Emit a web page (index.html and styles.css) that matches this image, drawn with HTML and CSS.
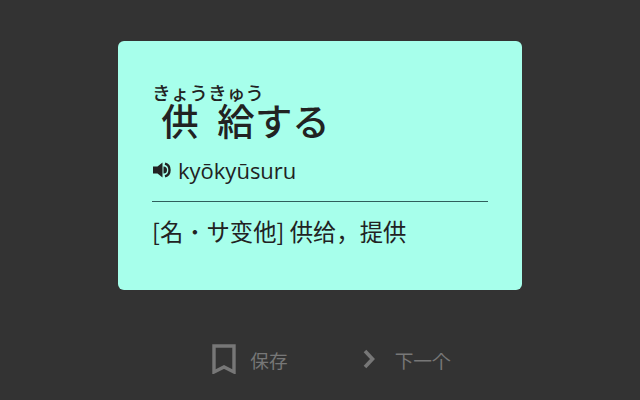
FILE: index.html
```html
<!DOCTYPE html>
<html lang="ja">
<head>
<meta charset="utf-8">
<title>供給する</title>
<link rel="stylesheet" href="styles.css">
</head>
<body>
<main class="page">
  <section class="card">
    <h1 class="word"><ruby>供<rt>きょう</rt></ruby><ruby>給<rt>きゅう</rt></ruby>する</h1>
    <div class="reading">
      <svg class="speaker" viewBox="0 0 18 16" width="18" height="16" aria-hidden="true">
        <path d="M0 4.5h4.5L9.5 .5v15l-5-4H0z" fill="#222"/>
        <path d="M10.5 4.5a3.5 3.5 0 0 1 0 7z" fill="#222"/>
        <path d="M12 1.6c6 1.6 6 11.2 0 12.8" fill="none" stroke="#222" stroke-width="2.4"/>
      </svg>
      <span>kyōkyūsuru</span>
    </div>
    <hr class="rule">
    <p class="meaning">[名<span class="dot">・</span>サ变他] 供给，提供</p>
  </section>
  <nav class="actions">
    <a class="action save">
      <svg viewBox="0 0 24 30" width="24" height="30" aria-hidden="true"><path d="M2 2h20v26l-10-5-10 5z" fill="none" stroke="#777" stroke-width="3.4"/></svg>
      <span>保存</span>
    </a>
    <a class="action next">
      <svg viewBox="0 0 14 20" width="14" height="20" aria-hidden="true"><path d="M3 2l7.5 8L3 18" fill="none" stroke="#777" stroke-width="3.6"/></svg>
      <span>下一个</span>
    </a>
  </nav>
</main>
</body>
</html>
```
FILE: styles.css
```css
* { box-sizing: border-box; }
html, body { margin: 0; height: 100%; }
body {
  background: #333333;
  font-family: "Open Sans", "Noto Sans CJK SC", sans-serif;
  overflow: hidden;
}
.page {
  width: 640px;
  height: 400px;
  padding-top: 41px;
  display: flex;
  flex-direction: column;
  align-items: center;
}
.card {
  width: 404px;
  height: 249px;
  background: #a7ffeb;
  border-radius: 6px;
  padding: 42px 34px 0;
  color: #222;
}
.word {
  margin: 0;
  font-family: "Noto Sans CJK JP", sans-serif;
  font-size: 37.33px;
  font-weight: 500;
  line-height: 60px;
}
.word rt { font-size: 18.67px; font-weight: 500; line-height: 1; }
.reading {
  display: flex;
  align-items: center;
  gap: 7px;
  margin-top: 5px;
  font-size: 22px;
  line-height: 30px;
}
.speaker { flex: none; margin-left: 1px; }
.rule {
  margin: 16px 0 0;
  border: 0;
  border-top: 1px solid #2f5f5c;
}
.meaning {
  margin: 12px 0 0;
  font-family: "Noto Sans CJK SC", sans-serif;
  font-size: 23.33px;
  line-height: 34px;
}
.dot {
  display: inline-block;
  width: 1em;
  text-align: center;
  font-family: "Noto Sans CJK JP", sans-serif;
  font-weight: 300;
}
.actions {
  display: flex;
  align-items: center;
  margin-top: 54px;
  margin-left: 23px;
  color: #777;
  font-family: "Noto Sans CJK SC", sans-serif;
  font-size: 18.67px;
}
.action { display: flex; align-items: center; }
.save { gap: 14px; }
.next { gap: 19px; margin-left: 74px; }
```
